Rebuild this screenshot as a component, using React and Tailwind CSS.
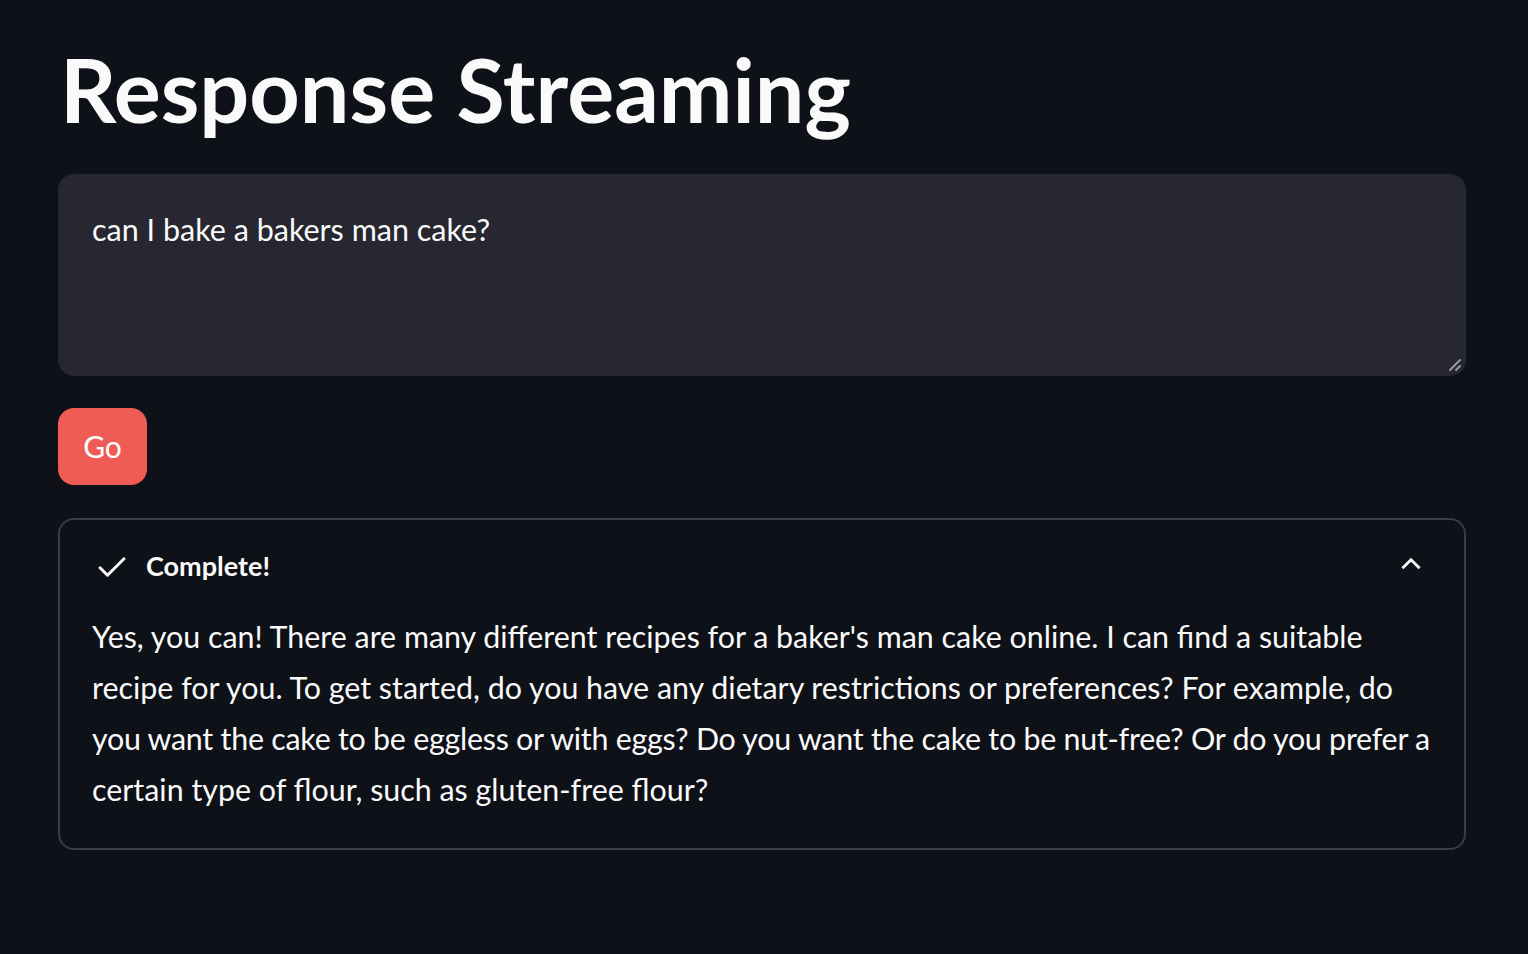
import React from 'react';

const Check = () => (
  <svg width="36" height="36" viewBox="0 0 24 24" fill="none" stroke="#fafafa" strokeWidth="2" strokeLinecap="round" strokeLinejoin="round">
    <path d="M4 12.5l5 5L20 6.5" />
  </svg>
);

const ChevronUp = () => (
  <svg width="26" height="26" viewBox="0 0 24 24" fill="none" stroke="#fafafa" strokeWidth="2.6" strokeLinecap="square">
    <path d="M5 15l7-7 7 7" />
  </svg>
);

export default function App() {
  return (
    <div className="min-h-[954px] w-full bg-[#0e1117] text-[#fafafa] font-['Lato',sans-serif]">
      <div className="pl-[58px] pr-[62px] pt-[37px] flex flex-col">
        {/* Title */}
        <h1 className="text-[88px] font-bold leading-[1.2] pl-[2px]">Response Streaming</h1>

        {/* Text area */}
        <div className="relative mt-[31px] h-[202px] rounded-[16px] bg-[#262730] px-[34px] pt-[34px]">
          <p className="text-[30.5px] leading-[1.4]">can I bake a bakers man cake?</p>
          <svg className="absolute right-[3px] bottom-[3px]" width="16" height="16" viewBox="0 0 16 16" stroke="#9a9ba1" strokeWidth="2" strokeLinecap="round">
            <path d="M3 13L13 3" />
            <path d="M9 13l4-4" />
          </svg>
        </div>

        {/* Button */}
        <div className="mt-[32px]">
          <button className="h-[77px] w-[89px] rounded-[16px] bg-[#ee5c55] text-[30px] text-white">Go</button>
        </div>

        {/* Expander */}
        <div className="mt-[33px] rounded-[16px] border-2 border-[#3b3d45] px-[32px] pt-[27px] pb-[33px]">
          <div className="flex items-center justify-between h-[40px]">
            <div className="flex items-center gap-[16px] pl-[2px]">
              <Check />
              <span className="text-[27px] font-bold">Complete!</span>
            </div>
            <div className="mr-[8px] -mt-[6px]"><ChevronUp /></div>
          </div>
          <p className="mt-[24px] text-[30.4px] leading-[51px] whitespace-nowrap">
            Yes, you can! There are many different recipes for a baker's man cake online. I can find a suitable
            <br />
            recipe for you. To get started, do you have any dietary restrictions or preferences? For example, do
            <br />
            <span className="tracking-[-0.25px]">you want the cake to be eggless or with eggs? Do you want the cake to be nut-free? Or do you prefer a</span>
            <br />
            certain type of flour, such as gluten-free flour?
          </p>
        </div>
      </div>
    </div>
  );
}
